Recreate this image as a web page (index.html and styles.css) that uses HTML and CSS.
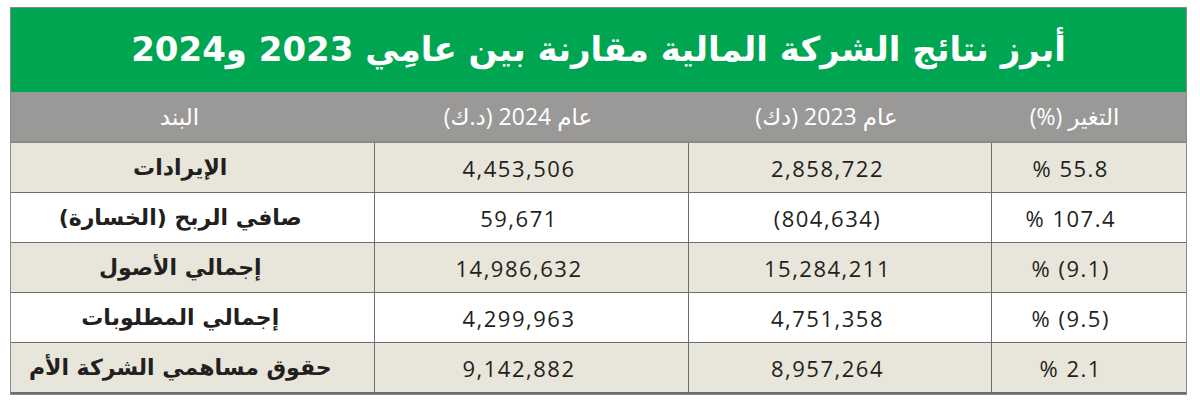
FILE: index.html
```html
<!DOCTYPE html>
<html lang="ar" dir="rtl">
<head>
<meta charset="utf-8">
<link rel="stylesheet" href="styles.css">
</head>
<body>
<div class="card">
  <h1 class="title">أبرز نتائج الشركة المالية مقارنة بين عامِي 2023 و2024</h1>
  <table class="results">
    <colgroup>
      <col class="c-change"><col class="c-y23"><col class="c-y24"><col class="c-item">
    </colgroup>
    <thead>
      <tr>
        <th>التغير (%)</th>
        <th>عام 2023 (دك)</th>
        <th>عام 2024 (د.ك)</th>
        <th>البند</th>
      </tr>
    </thead>
    <tbody>
      <tr class="shade">
        <td class="num">% 55.8</td><td class="num">2,858,722</td><td class="num">4,453,506</td><td class="label">الإيرادات</td>
      </tr>
      <tr>
        <td class="num">% 107.4</td><td class="num">(804,634)</td><td class="num">59,671</td><td class="label">صافي الربح (الخسارة)</td>
      </tr>
      <tr class="shade">
        <td class="num">% (9.1)</td><td class="num">15,284,211</td><td class="num">14,986,632</td><td class="label">إجمالي الأصول</td>
      </tr>
      <tr>
        <td class="num">% (9.5)</td><td class="num">4,751,358</td><td class="num">4,299,963</td><td class="label">إجمالي المطلوبات</td>
      </tr>
      <tr class="shade">
        <td class="num">% 2.1</td><td class="num">8,957,264</td><td class="num">9,142,882</td><td class="label">حقوق مساهمي الشركة الأم</td>
      </tr>
    </tbody>
  </table>
</div>
</body>
</html>
```

FILE: styles.css
```css
html, body {
  margin: 0;
  padding: 0;
  background: #ffffff;
}
body {
  padding: 7px 13px 0 10px;
  font-family: "DejaVu Sans", "Noto Sans", sans-serif;
}
.card {
  width: 1177px;
  border: 1px solid #8a8a8a;
  box-sizing: border-box;
}
.title {
  margin: 0;
  height: 84px;
  background: #00a551;
  color: #ffffff;
  font-size: 34px;
  font-weight: bold;
  display: flex;
  align-items: center;
  justify-content: center;
  padding-bottom: 2px;
  box-sizing: border-box;
}
.results {
  width: 100%;
  border-collapse: collapse;
  table-layout: fixed;
}
.c-change { width: 195px; }
.c-y23 { width: 303px; }
.c-y24 { width: 314px; }
.c-item { width: auto; }
.results th {
  background: #9a9997;
  color: #ffffff;
  font-weight: normal;
  font-size: 23px;
  height: 47px;
  padding: 0 26px 2px 0;
  text-align: center;
  font-family: "Open Sans", "DejaVu Sans", sans-serif;
  border-bottom: 2px solid #8a8a8a;
}
.results th:first-child { padding-right: 28px; }
.results td {
  height: 49px;
  padding: 0 24px 0 0;
  text-align: center;
  border: 1px solid #6e6e6e;
  color: #231f20;
}
.results tr:last-child td { border-bottom: 2px solid #6e6e6e; }
.results td:first-child { border-right: none; padding-right: 36px; }
.results td:last-child { border-left: none; }
.results tr.shade td { background: #e8e5da; }
.num {
  font-family: "Open Sans", sans-serif;
  font-size: 22px;
  letter-spacing: 1.5px;
  direction: ltr;
}
.label {
  font-weight: bold;
  font-size: 22px;
}
```
